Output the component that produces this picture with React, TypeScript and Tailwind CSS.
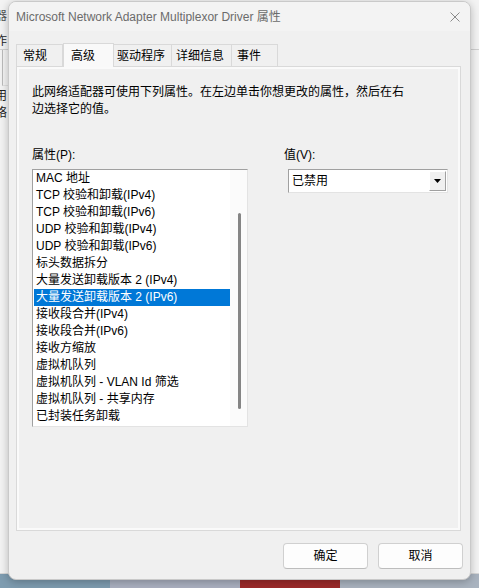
import React from "react";

const items = [
  "MAC 地址",
  "TCP 校验和卸载(IPv4)",
  "TCP 校验和卸载(IPv6)",
  "UDP 校验和卸载(IPv4)",
  "UDP 校验和卸载(IPv6)",
  "标头数据拆分",
  "大量发送卸载版本 2 (IPv4)",
  "大量发送卸载版本 2 (IPv6)",
  "接收段合并(IPv4)",
  "接收段合并(IPv6)",
  "接收方缩放",
  "虚拟机队列",
  "虚拟机队列 - VLAN Id 筛选",
  "虚拟机队列 - 共享内存",
  "已封装任务卸载",
];

const FONT = { fontFamily: '"Liberation Sans", "Noto Sans CJK SC", sans-serif' };

export default function App() {
  return (
    <div
      className="relative w-[479px] h-[588px] overflow-hidden bg-[#8fa6b6] text-[12px] text-black"
      style={FONT}
    >
      {/* background window */}
      <div className="absolute left-0 top-0 w-[479px] h-[574px] bg-[#f3f3f3] border-b border-[#d6d6d6]">
        <div className="h-[50px] border-b border-[#d0d0d0] flex flex-col text-[12px] leading-[20px] pt-[6px]">
          <span className="text-[#555] -ml-[5px]">器</span>
          <span className="text-[#222] -ml-[5px] mt-[5px]">作</span>
        </div>
        <div className="h-[36px] border-b border-[#e0e0e0] ml-[2px] border-l border-l-[#bbbbbb] w-[8px]" />
        <div className="flex flex-col text-[12px] leading-[17px] text-[#222] -ml-[5px] mt-[2px]">
          <span>用</span>
          <span>络</span>
        </div>
      </div>
      {/* wallpaper strip */}
      <div className="absolute left-0 top-[574px] w-[479px] h-[14px] flex">
        <div className="w-[110px] bg-[#7e9cb0]" />
        <div className="w-[130px] bg-[#aab0c0]" />
        <div className="w-[100px] bg-[#9c2a2a]" />
        <div className="flex-1 bg-[#a9b3bf]" />
      </div>

      {/* dialog */}
      <div className="absolute left-[8px] top-[1px] w-[463px] h-[579px] rounded-[8px] bg-[#f0f0f0] border border-[#c9c9c9] shadow-[0_2px_8px_rgba(0,0,0,0.25)] flex flex-col overflow-hidden">
        {/* title bar */}
        <div className="h-[29px] shrink-0 flex items-center justify-between bg-[#f3f3f3] pl-[7px] pr-[10px]">
          <span className="text-[12px] text-[#6b6b6b] pt-[1px]">
            Microsoft Network Adapter Multiplexor Driver 属性
          </span>
          <svg width="10" height="10" viewBox="0 0 10 10">
            <path d="M0.5 0.5 L9.5 9.5 M9.5 0.5 L0.5 9.5" stroke="#8a8a8a" strokeWidth="1" />
          </svg>
        </div>

        {/* tabs */}
        <div className="flex items-end h-[25px] pl-[7px] mt-[10px] shrink-0">
          <div className="w-[47px] h-[22px] border border-b-0 border-[#d9d9d9] bg-[#f0f0f0] flex items-center pl-[6px]">常规</div>
          <div className="w-[51px] h-[24px] border border-b-0 border-[#d9d9d9] bg-[#f9f9f9] flex items-center pl-[7px] -mb-px z-10">高级</div>
          <div className="w-[58px] h-[22px] border border-l-0 border-b-0 border-[#d9d9d9] bg-[#f0f0f0] flex items-center pl-[3px]">驱动程序</div>
          <div className="w-[60px] h-[22px] border border-l-0 border-b-0 border-[#d9d9d9] bg-[#f0f0f0] flex items-center pl-[4px]">详细信息</div>
          <div className="w-[46px] h-[22px] border border-l-0 border-b-0 border-[#d9d9d9] bg-[#f0f0f0] flex items-center pl-[5px]">事件</div>
        </div>

        {/* panel */}
        <div className="ml-[7px] w-[445px] h-[465px] shrink-0 border border-[#d9d9d9] bg-[#f0f0f0]">
          <div className="w-full h-full border-2 border-[#fafafa] pl-[13px] pt-[15px]">
            <p className="leading-[17px] w-[380px]">
              此网络适配器可使用下列属性。在左边单击你想更改的属性，然后在右边选择它的值。
            </p>
            <div className="flex mt-[29px]">
              <div className="flex flex-col">
                <div className="leading-[17px] h-[17px]">属性(P):</div>
                <div className="mt-[5px] w-[216px] h-[258px] border border-[#a0a0a0] border-r-[#e3e3e3] border-b-[#e3e3e3] bg-white flex">
                  <div className="w-[197px] pl-[1px] flex flex-col">
                    {items.map((t, i) => (
                      <div
                        key={t}
                        className={
                          i === 7
                            ? "h-[17px] leading-[17px] pl-[2px] bg-[#0078d7] text-white"
                            : "h-[17px] leading-[17px] pl-[2px]"
                        }
                      >
                        {t}
                      </div>
                    ))}
                  </div>
                  <div className="flex-1 bg-[#fbfbfb] flex justify-center pt-[43px]">
                    <div className="w-[3px] h-[196px] rounded-full bg-[#858585] ml-[2px]" />
                  </div>
                </div>
              </div>
              <div className="flex flex-col ml-[36px]">
                <div className="leading-[17px] h-[17px]">值(V):</div>
                <div className="mt-[5px] ml-[4px] w-[160px] h-[24px] border border-[#a0a0a0] border-r-[#e3e3e3] border-b-[#e3e3e3] bg-white flex items-center">
                  <span className="pl-[3px] flex-1">已禁用</span>
                  <div className="w-[17px] h-[20px] mr-[1px] bg-[#f0f0f0] border border-[#fff] border-r-[#a0a0a0] border-b-[#a0a0a0] flex items-center justify-center">
                    <svg width="7" height="4" viewBox="0 0 7 4">
                      <path d="M0 0 H7 L3.5 4 Z" fill="#000" />
                    </svg>
                  </div>
                </div>
              </div>
            </div>
          </div>
        </div>

        {/* buttons */}
        <div className="flex justify-end gap-[10px] pr-[7px] mt-[12px]">
          <button className="w-[85px] h-[26px] rounded-[4px] bg-[#fdfdfd] border border-[#d0d0d0] border-b-[#bdbdbd] text-[12px]">确定</button>
          <button className="w-[85px] h-[26px] rounded-[4px] bg-[#fdfdfd] border border-[#d0d0d0] border-b-[#bdbdbd] text-[12px]">取消</button>
        </div>
      </div>
    </div>
  );
}
